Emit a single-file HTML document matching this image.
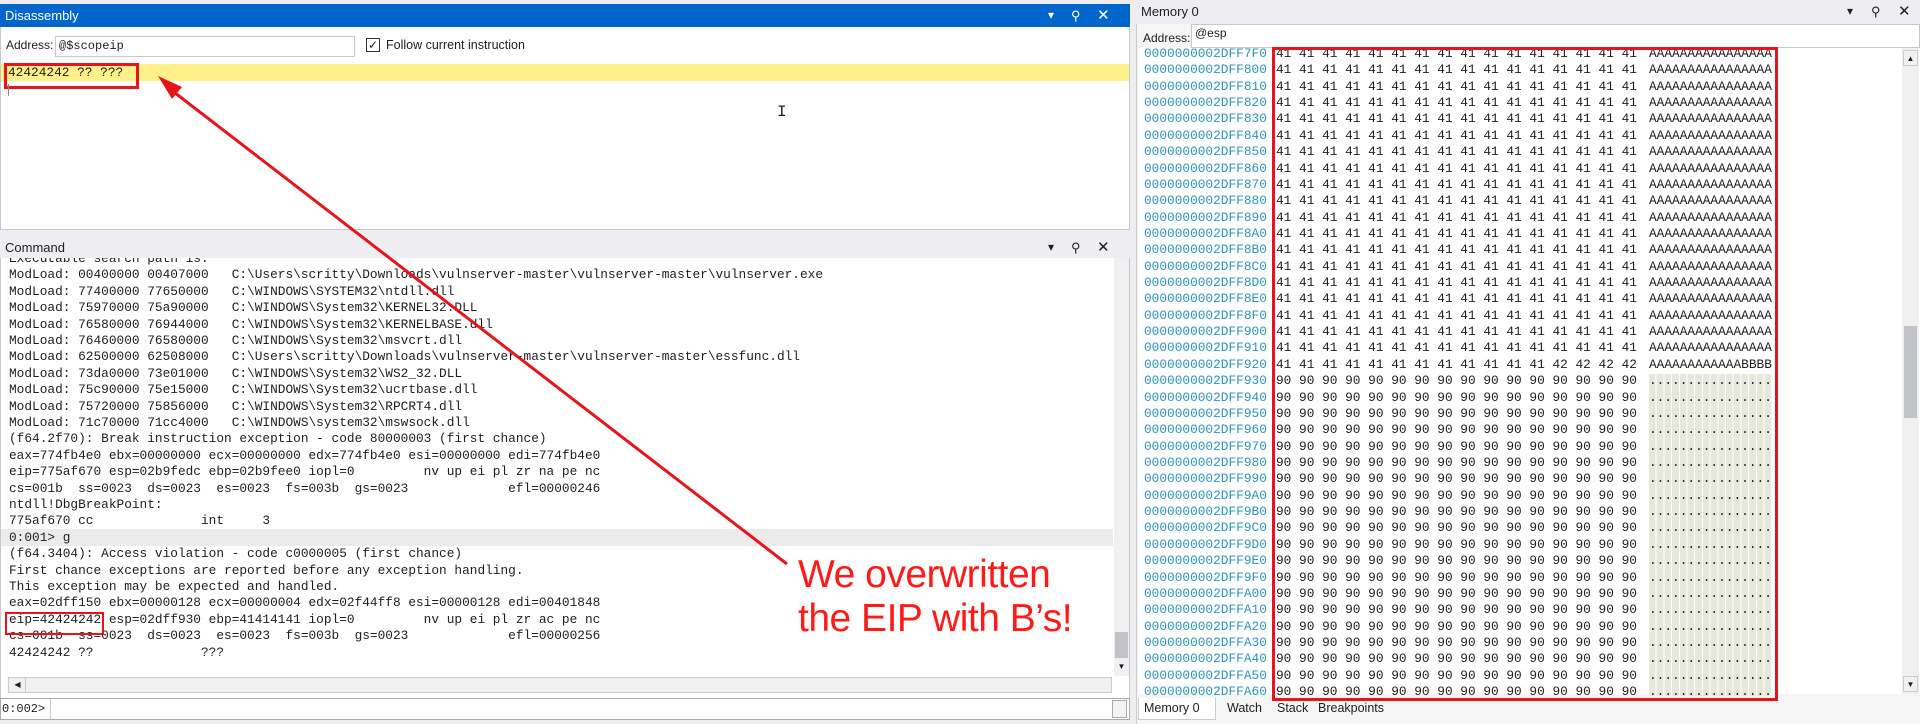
<!DOCTYPE html>
<html><head><meta charset="utf-8"><style>
*{margin:0;padding:0;box-sizing:border-box}
body{width:1920px;height:724px;background:#eeeef2;position:relative;overflow:hidden;font-family:"Liberation Sans",sans-serif;font-size:12px;color:#1e1e1e}
.abs{position:absolute}
.mono{font-family:"Liberation Mono",monospace;font-size:12.8px;white-space:pre}
.title{font-size:13px;line-height:23px;padding-left:5px}
.ln{position:absolute;left:8px;height:16.4px;line-height:16.4px}
.row{position:absolute;height:16.4px;line-height:16.4px}
</style></head><body>
<!-- Disassembly -->
<div class="abs" style="left:0;top:4px;width:1130px;height:226px;background:#fff;border:1px solid #c8c8c8"></div>
<div class="abs title" style="left:0;top:4px;width:1130px;height:23px;background:#0066cc;color:#fff">Disassembly</div>
<div class="abs" style="left:1048px;top:4px;color:#fff;font-size:12px;line-height:23px">▾</div>
<div class="abs" style="left:1071px;top:4px;color:#fff;font-size:13px;line-height:23px">⚲</div>
<div class="abs" style="left:1097px;top:4px;color:#fff;font-size:15px;line-height:23px">✕</div>
<div class="abs" style="left:6px;top:38px;font-size:12px">Address:</div>
<div class="abs mono" style="left:55px;top:36px;width:300px;height:21px;border:1px solid #c8c8c8;background:#fff;padding:2px 3px;font-size:12px">@$scopeip</div>
<div class="abs" style="left:366px;top:38px;width:14px;height:14px;border:1px solid #333;background:#fff;font-size:12px;line-height:12px;text-align:center">✓</div>
<div class="abs" style="left:386px;top:38px;font-size:12.5px">Follow current instruction</div>
<div class="abs" style="left:1px;top:64px;width:1128px;height:17px;background:#fff08a"></div>
<div class="abs mono" style="left:8px;top:64px;line-height:17px">42424242 ?? ???</div>
<div class="abs" style="left:4px;top:63px;width:135px;height:26px;border:3px solid #e8141b"></div>
<div class="abs" style="left:8px;top:84px;width:1px;height:12px;background:#888"></div>
<div class="abs mono" style="left:777px;top:103px;font-size:16px">I</div>

<!-- Command -->
<div class="abs" style="left:0;top:236px;width:1130px;height:465px;background:#fff;border:1px solid #c8c8c8"></div>
<div class="abs title" style="left:0;top:236px;width:1130px;height:22px;background:#eeeef2">Command</div>
<div class="abs" style="left:1048px;top:236px;font-size:12px;line-height:23px">▾</div>
<div class="abs" style="left:1071px;top:236px;font-size:13px;line-height:23px">⚲</div>
<div class="abs" style="left:1097px;top:236px;font-size:15px;line-height:23px">✕</div>
<div class="abs" style="left:1px;top:258px;width:1112px;height:418px;overflow:hidden">
<div class="abs" style="left:0;top:271px;width:1112px;height:17px;background:#ebebeb"></div>
<div class="mono" style="position:absolute;left:0;top:-7px">
<div class="ln" style="top:0">Executable search path is:</div>
<div class="ln" style="top:16.4px">ModLoad: 00400000 00407000   C:\Users\scritty\Downloads\vulnserver-master\vulnserver-master\vulnserver.exe</div>
<div class="ln" style="top:32.8px">ModLoad: 77400000 77650000   C:\WINDOWS\SYSTEM32\ntdll.dll</div>
<div class="ln" style="top:49.2px">ModLoad: 75970000 75a90000   C:\WINDOWS\System32\KERNEL32.DLL</div>
<div class="ln" style="top:65.6px">ModLoad: 76580000 76944000   C:\WINDOWS\System32\KERNELBASE.dll</div>
<div class="ln" style="top:82px">ModLoad: 76460000 76580000   C:\WINDOWS\System32\msvcrt.dll</div>
<div class="ln" style="top:98.4px">ModLoad: 62500000 62508000   C:\Users\scritty\Downloads\vulnserver-master\vulnserver-master\essfunc.dll</div>
<div class="ln" style="top:114.8px">ModLoad: 73da0000 73e01000   C:\WINDOWS\System32\WS2_32.DLL</div>
<div class="ln" style="top:131.2px">ModLoad: 75c90000 75e15000   C:\WINDOWS\System32\ucrtbase.dll</div>
<div class="ln" style="top:147.6px">ModLoad: 75720000 75856000   C:\WINDOWS\System32\RPCRT4.dll</div>
<div class="ln" style="top:164px">ModLoad: 71c70000 71cc4000   C:\WINDOWS\system32\mswsock.dll</div>
<div class="ln" style="top:180.4px">(f64.2f70): Break instruction exception - code 80000003 (first chance)</div>
<div class="ln" style="top:196.8px">eax=774fb4e0 ebx=00000000 ecx=00000000 edx=774fb4e0 esi=00000000 edi=774fb4e0</div>
<div class="ln" style="top:213.2px">eip=775af670 esp=02b9fedc ebp=02b9fee0 iopl=0         nv up ei pl zr na pe nc</div>
<div class="ln" style="top:229.6px">cs=001b  ss=0023  ds=0023  es=0023  fs=003b  gs=0023             efl=00000246</div>
<div class="ln" style="top:246px">ntdll!DbgBreakPoint:</div>
<div class="ln" style="top:262.4px">775af670 cc              int     3</div>
<div class="ln" style="top:278.8px">0:001&gt; g</div>
<div class="ln" style="top:295.2px">(f64.3404): Access violation - code c0000005 (first chance)</div>
<div class="ln" style="top:311.6px">First chance exceptions are reported before any exception handling.</div>
<div class="ln" style="top:328px">This exception may be expected and handled.</div>
<div class="ln" style="top:344.4px">eax=02dff150 ebx=00000128 ecx=00000004 edx=02f44ff8 esi=00000128 edi=00401848</div>
<div class="ln" style="top:360.8px">eip=42424242 esp=02dff930 ebp=41414141 iopl=0         nv up ei pl zr ac pe nc</div>
<div class="ln" style="top:377.2px">cs=001b  ss=0023  ds=0023  es=0023  fs=003b  gs=0023             efl=00000256</div>
<div class="ln" style="top:393.6px">42424242 ??              ???</div>
</div></div>
<div class="abs" style="left:5px;top:612px;width:99px;height:23px;border:2px solid #e8141b"></div>
<!-- command scrollbars -->
<div class="abs" style="left:1114px;top:258px;width:15px;height:418px;background:#f0f0f0"></div>
<div class="abs" style="left:1115px;top:632px;width:13px;height:26px;background:#c2c3c9"></div>
<div class="abs" style="left:1115px;top:660px;width:13px;height:14px;font-size:8px;text-align:center;line-height:14px">▼</div>
<div class="abs" style="left:8px;top:677px;width:1104px;height:16px;background:#f0f0f0;border:1px solid #ccc"></div>
<div class="abs" style="left:10px;top:678px;width:16px;height:14px;font-size:8px;line-height:14px;text-align:center;border-right:1px solid #ccc">◀</div>
<div class="abs" style="left:0;top:698px;width:1130px;height:22px;background:#fff;border:1px solid #aaa"></div>
<div class="abs mono" style="left:2px;top:700px;line-height:18px;font-size:12px">0:002&gt;</div>
<div class="abs" style="left:50px;top:699px;width:1px;height:20px;background:#ccc"></div>
<div class="abs" style="left:1112px;top:700px;width:15px;height:18px;border:1px solid #aaa;background:#f3f3f3"></div>

<!-- Memory -->
<div class="abs" style="left:1136px;top:0;width:784px;height:724px;background:#f5f5f5;border-left:1px solid #ccc"></div>
<div class="abs title" style="left:1136px;top:0;width:784px;height:24px;background:#eeeef2">Memory 0</div>
<div class="abs" style="left:1847px;top:0;font-size:12px;line-height:23px">▾</div>
<div class="abs" style="left:1871px;top:0;font-size:13px;line-height:23px">⚲</div>
<div class="abs" style="left:1898px;top:0;font-size:15px;line-height:23px">✕</div>
<div class="abs" style="left:1143px;top:31px;font-size:12px">Address:</div>
<div class="abs" style="left:1191px;top:24px;width:729px;height:24px;background:#fff;border:1px solid #c8c8c8;padding:1px 3px;font-size:12px">@esp</div>
<div class="abs" style="left:1138px;top:48px;width:782px;height:646px;background:#fff"></div>
<div class="abs" style="left:1649px;top:374px;width:123px;height:322px;background:repeating-linear-gradient(90deg,#e6e8da 0,#e6e8da 6.7px,#fff 6.7px,#fff 7.7px)"></div>
<div id="mem" class="mono"></div>
<div class="abs" style="left:1272px;top:47px;width:506px;height:654px;border:3px solid #e8141b"></div>
<div class="abs" style="left:1902px;top:48px;width:17px;height:646px;background:#f0f0f0"></div>
<div class="abs" style="left:1903px;top:50px;width:15px;height:16px;font-size:8px;text-align:center;line-height:16px;border:1px solid #ccc">▲</div>
<div class="abs" style="left:1904px;top:326px;width:13px;height:92px;background:#c2c3c9"></div>
<div class="abs" style="left:1903px;top:676px;width:15px;height:16px;font-size:8px;text-align:center;line-height:16px;border:1px solid #ccc">▼</div>
<div class="abs" style="left:1138px;top:698px;width:78px;height:22px;background:#fff;border:1px solid #ccc;border-top:none;font-size:12.5px;line-height:21px;padding-left:5px">Memory 0</div>
<div class="abs" style="left:1227px;top:701px;font-size:12.5px">Watch</div>
<div class="abs" style="left:1277px;top:701px;font-size:12.5px">Stack</div>
<div class="abs" style="left:1318px;top:701px;font-size:12.5px">Breakpoints</div>

<!-- annotation -->
<svg class="abs" style="left:0;top:0" width="1920" height="724">
<line x1="787" y1="564" x2="166" y2="86" stroke="#e8141b" stroke-width="3"/>
<polygon points="158,76 182,87 172,99" fill="#e8141b"/>
</svg>
<div class="abs" style="left:798px;top:553px;color:#ff1a1a;font-size:39px;line-height:44px;letter-spacing:-0.5px">We overwritten<br>the EIP with B’s!</div>

<script>
var h='';
for(var i=0;i<40;i++){
 var a=0x2DFF7F0+i*16;
 var addr=('0000000000000000'+a.toString(16).toUpperCase()).slice(-16);
 var hex,asc;
 if(i<19){hex=Array(17).join('41 ').trim();asc='AAAAAAAAAAAAAAAA';}
 else if(i==19){hex='41 41 41 41 41 41 41 41 41 41 41 41 42 42 42 42';asc='AAAAAAAAAAAABBBB';}
 else{hex=Array(17).join('90 ').trim();asc='................';}
 var t=(46+i*16.36).toFixed(2);
 h+='<div class="row" style="left:1144px;top:'+t+'px;color:#2e93b8">'+addr+'</div>';
 h+='<div class="row" style="left:1276px;top:'+t+'px">'+hex+'</div>';
 h+='<div class="row" style="left:1649px;top:'+t+'px">'+asc+'</div>';
}
document.getElementById('mem').innerHTML=h;
</script>
</body></html>
